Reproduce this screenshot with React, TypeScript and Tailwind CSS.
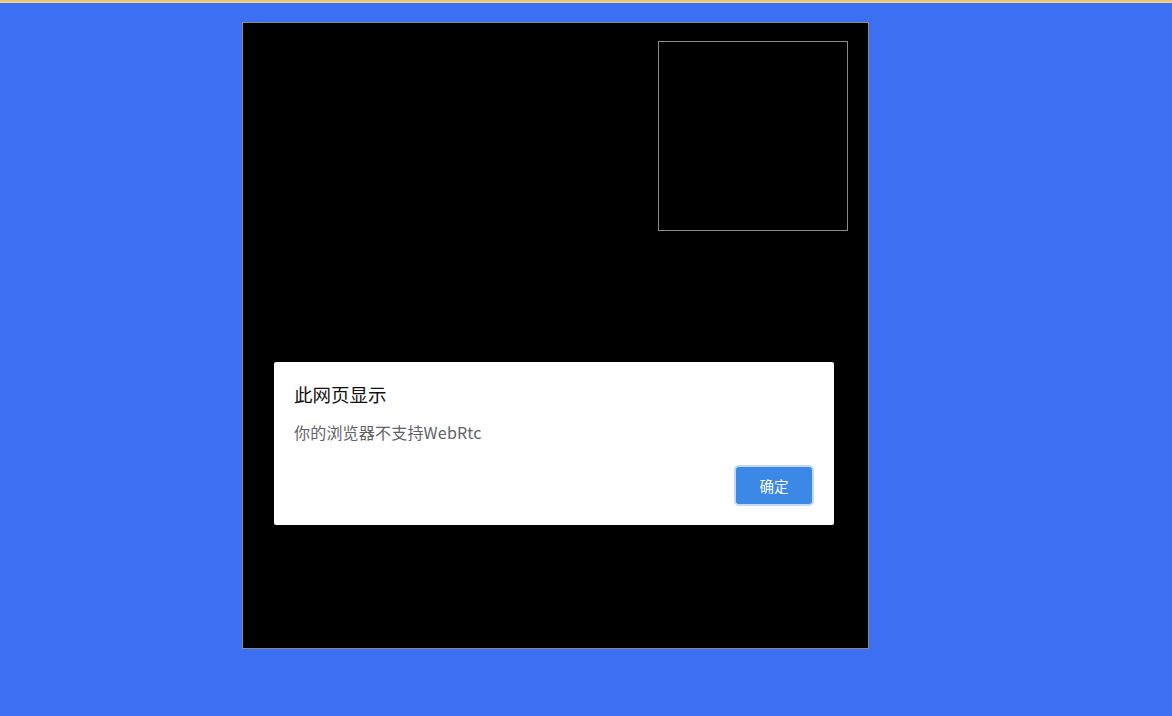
export default function App() {
  return (
    <div
      className="min-h-[716px] w-full bg-[#3d6ff2]"
      style={{ fontFamily: '"Microsoft YaHei", "Noto Sans CJK SC", "Noto Sans", sans-serif' }}
    >
      {/* top strip */}
      <div className="h-[3px] w-full bg-gradient-to-b from-[#e9c06a] to-[#f6dc95]" />

      <div className="pt-[19px] pl-[242px]">
        <div className="relative h-[627px] w-[627px] border border-[#8a8a8a] bg-black">
          {/* local preview */}
          <div className="ml-[415px] mt-[18px] h-[190px] w-[190px] border border-[#8a8a8a] bg-black" />

          {/* alert dialog */}
          <div className="absolute left-[31px] top-[339px] w-[560px] rounded-[2px] bg-white px-[20px] pt-[20px] pb-[19px] shadow-[0_0_2px_rgba(0,0,0,0.4)]">
            <div className="text-[18.5px] font-normal leading-[24px] text-[#111111]">此网页显示</div>
            <div className="mt-[16px] text-[16px] font-normal leading-[20px] text-[#5f6368] tracking-[0.2px]">你的浏览器不支持WebRtc</div>
            <div className="mt-[23px] flex justify-end">
              <button className="h-[41px] w-[80px] rounded-[5px] border-2 border-[#c3d9f7] bg-[#3b88e6] text-[14.5px] text-white">
                确定
              </button>
            </div>
          </div>
        </div>
      </div>
    </div>
  );
}
